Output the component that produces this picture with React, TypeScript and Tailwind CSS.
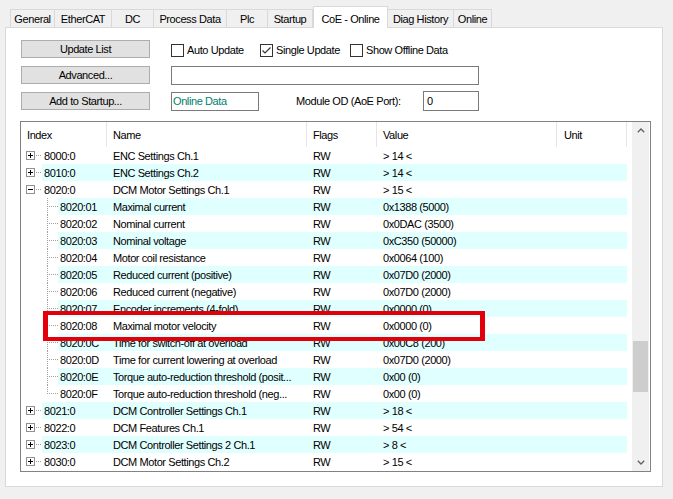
import React from "react";

type Kind = "plus" | "minus" | "child" | "last";

interface Row {
  idx: string;
  name: string;
  value: string;
  kind: Kind;
}

const rows: Row[] = [
  { idx: "8000:0", name: "ENC Settings Ch.1", value: "> 14 <", kind: "plus" },
  { idx: "8010:0", name: "ENC Settings Ch.2", value: "> 14 <", kind: "plus" },
  { idx: "8020:0", name: "DCM Motor Settings Ch.1", value: "> 15 <", kind: "minus" },
  { idx: "8020:01", name: "Maximal current", value: "0x1388 (5000)", kind: "child" },
  { idx: "8020:02", name: "Nominal current", value: "0x0DAC (3500)", kind: "child" },
  { idx: "8020:03", name: "Nominal voltage", value: "0xC350 (50000)", kind: "child" },
  { idx: "8020:04", name: "Motor coil resistance", value: "0x0064 (100)", kind: "child" },
  { idx: "8020:05", name: "Reduced current (positive)", value: "0x07D0 (2000)", kind: "child" },
  { idx: "8020:06", name: "Reduced current (negative)", value: "0x07D0 (2000)", kind: "child" },
  { idx: "8020:07", name: "Encoder increments (4-fold)", value: "0x0000 (0)", kind: "child" },
  { idx: "8020:08", name: "Maximal motor velocity", value: "0x0000 (0)", kind: "child" },
  { idx: "8020:0C", name: "Time for switch-off at overload", value: "0x00C8 (200)", kind: "child" },
  { idx: "8020:0D", name: "Time for current lowering at overload", value: "0x07D0 (2000)", kind: "child" },
  { idx: "8020:0E", name: "Torque auto-reduction threshold (posit...", value: "0x00 (0)", kind: "child" },
  { idx: "8020:0F", name: "Torque auto-reduction threshold (neg...", value: "0x00 (0)", kind: "last" },
  { idx: "8021:0", name: "DCM Controller Settings Ch.1", value: "> 18 <", kind: "plus" },
  { idx: "8022:0", name: "DCM Features Ch.1", value: "> 54 <", kind: "plus" },
  { idx: "8023:0", name: "DCM Controller Settings 2 Ch.1", value: "> 8 <", kind: "plus" },
  { idx: "8030:0", name: "DCM Motor Settings Ch.2", value: "> 15 <", kind: "plus" },
];

const tabs = [
  { label: "General", w: "w-[45px]" },
  { label: "EtherCAT", w: "w-[58px]" },
  { label: "DC", w: "w-[43px]" },
  { label: "Process Data", w: "w-[74px]" },
  { label: "Plc", w: "w-[42px]" },
  { label: "Startup", w: "w-[46px]" },
  { label: "CoE - Online", w: "w-[75px]", active: true },
  { label: "Diag History", w: "w-[67px]" },
  { label: "Online", w: "w-[39px]" },
];

const TreeGlyph = ({ kind }: { kind: Kind }) => {
  if (kind === "child" || kind === "last") {
    return (
      <svg width="37" height="17" className="shrink-0" shapeRendering="crispEdges">
        <line x1="26.5" y1="0" x2="26.5" y2={kind === "last" ? 9 : 17} stroke="#a0a0a0" strokeDasharray="1 1" />
        <line x1="28" y1="8.5" x2="37" y2="8.5" stroke="#a0a0a0" strokeDasharray="1 1" />
      </svg>
    );
  }
  return (
    <svg width="21" height="17" className="shrink-0" shapeRendering="crispEdges">
      <rect x="5.5" y="4.5" width="8" height="8" fill="#fff" stroke="#919191" />
      <line x1="7" y1="8.5" x2="12" y2="8.5" stroke="#000" />
      {kind === "plus" && <line x1="9.5" y1="6" x2="9.5" y2="11" stroke="#000" />}
      <line x1="15" y1="8.5" x2="21" y2="8.5" stroke="#a0a0a0" strokeDasharray="1 1" />
    </svg>
  );
};

const CheckBox = ({ checked }: { checked?: boolean }) => (
  <svg width="13" height="13" className="shrink-0" shapeRendering="crispEdges">
    <rect x="0.5" y="0.5" width="12" height="12" fill="#fff" stroke="#333" />
    {checked && (
      <path d="M2.5 6.5 L5 9 L10.5 3.5" fill="none" stroke="#333" strokeWidth="1.2" shapeRendering="auto" />
    )}
  </svg>
);

const Chevron = ({ down }: { down?: boolean }) => (
  <svg width="8" height="5">
    <path d={down ? "M0.8 0.8 L4 4 L7.2 0.8" : "M0.8 4.2 L4 1 L7.2 4.2"} fill="none" stroke="#606060" strokeWidth="1.3" />
  </svg>
);

const Button = ({ children }: { children: React.ReactNode }) => (
  <div className="w-[129px] h-[18px] bg-[#e1e1e1] border border-[#adadad] flex items-center justify-center pt-px shrink-0">
    {children}
  </div>
);

export default function App() {
  return (
    <div className="relative w-[673px] h-[499px] bg-[#f0f0f0] text-[11px] tracking-[-0.4px] text-black font-['Liberation_Sans',Arial,sans-serif] overflow-hidden">
      {/* tabs */}
      <div className="flex items-end h-[27px] pl-[10px]">
        {tabs.map((t) =>
          t.active ? (
            <div
              key={t.label}
              className={`${t.w} h-[22px] -mb-px relative z-10 bg-white border border-b-0 border-[#d9d9d9] flex items-start pt-[4px] justify-center`}
            >
              {t.label}
            </div>
          ) : (
            <div
              key={t.label}
              className={`${t.w} h-[18px] bg-[#f0f0f0] border-t border-l border-r border-[#d9d9d9] -ml-px first:ml-0 flex items-center justify-center pt-px`}
            >
              {t.label}
            </div>
          )
        )}
      </div>

      {/* panel */}
      <div className="ml-[5px] w-[658px] h-[460px] bg-white border border-[#d9d9d9] pl-[14px] pt-[11px]">
        <div className="flex flex-col gap-[6px] pl-px">
          <div className="flex items-center h-5">
            <Button>Update List</Button>
            <div className="flex items-center ml-[21px] mt-[3px] w-[89px] gap-[3px]">
              <CheckBox />
              <span>Auto Update</span>
            </div>
            <div className="flex items-center mt-[3px] w-[90px] gap-[3px]">
              <CheckBox checked />
              <span>Single Update</span>
            </div>
            <div className="flex items-center mt-[3px] gap-[3px]">
              <CheckBox />
              <span>Show Offline Data</span>
            </div>
          </div>
          <div className="flex items-center h-5">
            <Button>Advanced...</Button>
            <div className="ml-[21px] w-[308px] h-[19px] border border-[#7a7a7a] bg-white" />
          </div>
          <div className="flex items-center h-5">
            <Button>Add to Startup...</Button>
            <div className="ml-[21px] w-[88px] h-[19px] border border-[#7a7a7a] bg-white flex items-center pl-[1px] pt-px text-[#00806e]">
              Online Data
            </div>
            <div className="ml-[37px] w-[127px] pt-[1px]">Module OD (AoE Port):</div>
            <div className="w-[56px] h-5 border border-[#7a7a7a] bg-white flex items-center pl-[3px] pt-px">0</div>
          </div>
        </div>

        {/* list */}
        <div className="mt-[10px] w-[631px] h-[351px] border border-[#828282] bg-white flex overflow-hidden">
          <div className="w-[611px] shrink-0">
            <div className="flex h-[25px]">
              <div className="w-[86px] border-r border-[#e5e5e5] pl-[6px] pt-[2px] flex items-center">Index</div>
              <div className="w-[200px] border-r border-[#e5e5e5] pl-[6px] pt-[2px] flex items-center">Name</div>
              <div className="w-[70px] border-r border-[#e5e5e5] pl-[6px] pt-[2px] flex items-center">Flags</div>
              <div className="w-[180px] border-r border-[#e5e5e5] pl-[6px] pt-[2px] flex items-center">Value</div>
              <div className="w-[70px] border-r border-[#e5e5e5] pl-[7px] pt-[2px] flex items-center">Unit</div>
            </div>
            {rows.map((r, i) => {
              const child = r.kind === "child" || r.kind === "last";
              return (
                <div key={r.idx} className="flex h-[17px] mr-[5px]">
                  <TreeGlyph kind={r.kind} />
                  <div className={`flex flex-1 items-center pt-px whitespace-nowrap ${i % 2 === 1 ? "bg-[#e0ffff]" : ""}`}>
                    <div className={`${child ? "w-[49px]" : "w-[65px]"} pl-[2px]`}>{r.idx}</div>
                    <div className="w-[200px] pl-[6px] overflow-hidden">{r.name}</div>
                    <div className="w-[70px] pl-[6px]">RW</div>
                    <div className="w-[180px] pl-[6px]">{r.value}</div>
                    <div className="flex-1" />
                  </div>
                </div>
              );
            })}
          </div>
          {/* scrollbar */}
          <div className="w-[17px] shrink-0 bg-[#f0f0f0] flex flex-col">
            <div className="h-[17px] flex items-center justify-center">
              <Chevron />
            </div>
            <div className="flex-1">
              <div className="mt-[202px] mx-px h-[51px] bg-[#cdcdcd]" />
            </div>
            <div className="h-[17px] flex items-center justify-center">
              <Chevron down />
            </div>
          </div>
        </div>
      </div>

      {/* red highlight frame */}
      <div className="absolute left-[43px] top-[311px] w-[442px] h-[30px] border-x-[5px] border-y-4 border-[#e3000b]" />
    </div>
  );
}
